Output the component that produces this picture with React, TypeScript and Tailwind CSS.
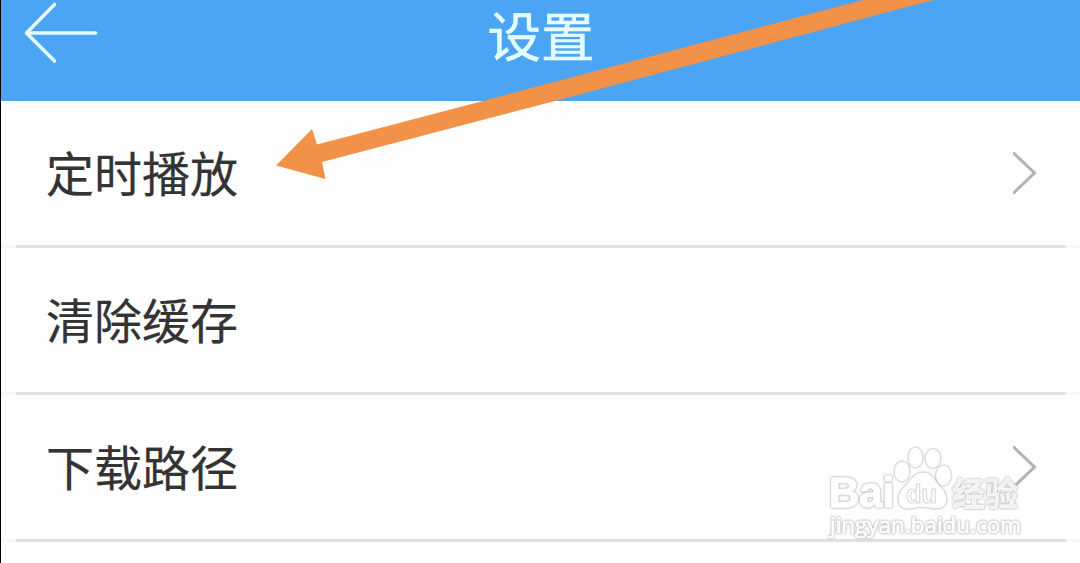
import React from "react";

type Item = { label: string; hasChevron: boolean };

const items: Item[] = [
  { label: "定时播放", hasChevron: true },
  { label: "清除缓存", hasChevron: false },
  { label: "下载路径", hasChevron: true },
];

function BackIcon() {
  return (
    <svg className="h-16 w-[76px]" viewBox="0 0 76 64" fill="none" stroke="#e4fdff" strokeWidth="3.6" strokeLinecap="round" strokeLinejoin="round">
      <path d="M32.500 4.500 4.500 33 32.500 61" />
      <path d="M5 33H73.500" />
    </svg>
  );
}

function ChevronIcon() {
  return (
    <svg className="h-11 w-6" viewBox="0 0 24 44" fill="none" stroke="#b3b3b3" strokeWidth="3">
      <path d="M0 1.500 21.500 22 0 42.500" />
    </svg>
  );
}

function Header() {
  return (
    <header className="relative flex h-[101px] items-start justify-center bg-[#4ba4f4]">
      <button aria-label="返回" className="absolute top-0 left-[21px]">
        <BackIcon />
      </button>
      <h1 className="pl-px text-[53.5px] leading-[68px] text-[#e4fdff] [-webkit-text-stroke:0.5px_#e4fdff]">设置</h1>
    </header>
  );
}

function SettingRow({ label, hasChevron }: Item) {
  return (
    <li className="flex h-[147px] flex-col">
      <div className="flex flex-1 items-center justify-between pr-[43px] pl-[45px]">
        <span className="pb-[4px] text-[48px] leading-[70px] text-[#333333] [-webkit-text-stroke:0.2px_#333333]">{label}</span>
        {hasChevron && <ChevronIcon />}
      </div>
      <div className="h-[3px] bg-[#f8f8f8] pr-[14px] pl-[15px]">
        <div className="h-full bg-[#e0e0e0]" />
      </div>
    </li>
  );
}

function PointerArrow() {
  return (
    <svg className="pointer-events-none absolute top-0 left-0 h-[563px] w-[1080px]" viewBox="0 0 1080 563">
      <path d="M276 165.500 312 129 317 144.500 483 101 863 0H933L555 101 322 162 325.500 179Z" fill="#f29249" />
    </svg>
  );
}

function Watermark() {
  return (
    <svg
      className="pointer-events-none absolute top-[440px] left-[820px] h-[105px] w-[210px] [filter:drop-shadow(0_0_1px_#a8a8a8)_drop-shadow(0_0_0.5px_#d8d8d8)]"
      viewBox="0 0 210 105"
      fill="#fefefe"
      stroke="#fefefe"
      strokeWidth="1.5"
      strokeLinejoin="round"
    >
      <text x="9" y="67" fontSize="43" fontWeight="700" textLength="65" lengthAdjust="spacingAndGlyphs" className="font-['Liberation_Sans',sans-serif]">Bai</text>
      <g strokeWidth="0">
        <ellipse cx="95.500" cy="17.500" rx="7" ry="10" />
        <ellipse cx="113" cy="18.500" rx="7.500" ry="9.500" />
        <ellipse cx="82" cy="31.500" rx="7.500" ry="10" />
        <ellipse cx="123.500" cy="35.500" rx="7.500" ry="10" />
        <path d="M103 32.500C96 32.500 92 38 88 43C83 49 78 52 78.500 60C79 67 84 69 90 68.500C96 67.500 98 67 103 67C108 67 111 69 117 68.500C124 68 127 64 126.500 58C126 51 119 46 115 40C112 35 108 32.500 103 32.500Z" />
      </g>
      <text x="86" y="63" fontSize="25" fontWeight="700" textLength="31" lengthAdjust="spacingAndGlyphs" stroke="#d6d6d6" strokeWidth="1" className="font-['Liberation_Sans',sans-serif]">du</text>
      <text x="132" y="65.500" fontSize="33" fontWeight="700" textLength="66" strokeWidth="0.5" fillOpacity="0.85" className="font-['Noto_Sans_CJK_SC',sans-serif]">经验</text>
      <text x="10" y="93" fontSize="21" textLength="191" lengthAdjust="spacingAndGlyphs" strokeWidth="0.8" className="font-['Open_Sans',sans-serif]">jingyan.baidu.com</text>
    </svg>
  );
}

export default function App() {
  return (
    <div className="relative h-[563px] w-[1080px] overflow-hidden border-l border-black bg-[#fefefe] font-['Noto_Sans_CJK_SC',sans-serif]">
      <Header />
      <ul>
        {items.map((item) => (
          <SettingRow key={item.label} {...item} />
        ))}
      </ul>
      <div className="pointer-events-none absolute inset-y-0 -left-px w-[1080px]">
        <PointerArrow />
        <Watermark />
      </div>
    </div>
  );
}
